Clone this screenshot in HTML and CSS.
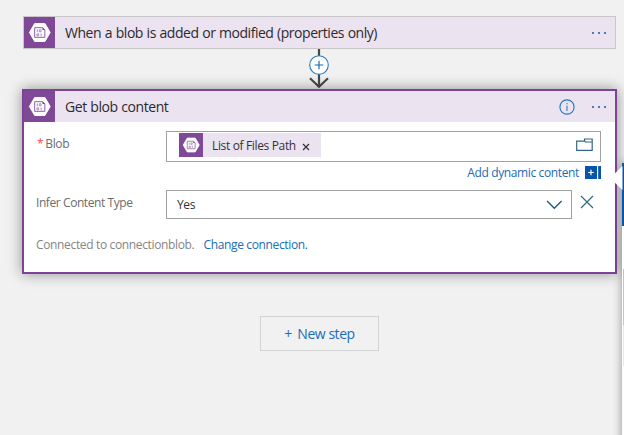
FILE: index.html
```html
<!DOCTYPE html>
<html lang="en">
<head>
<meta charset="utf-8">
<title>Workflow designer</title>
<link rel="stylesheet" href="styles.css">
</head>
<body>
<svg class="defs" aria-hidden="true">
  <symbol id="blob" viewBox="0 0 32 32">
    <path d="M5.6 16L11 6.7H21.6L27 16L21.6 25.3H11Z" fill="#fff" stroke="#fff" stroke-linejoin="round"/>
    <path d="M11 11H19.3L21.5 13.2V21H11Z" fill="none" stroke="#8e5ba7" stroke-width="1"/>
    <path d="M19 10.7V13.4H21.8Z" fill="#804998"/>
    <path d="M13.7 12.8V15.7M15.8 13.2H17.6V15.3H15.8ZM13.3 17.4H15.1V19.5H13.3ZM17.7 17V20" fill="none" stroke="#a57bb8" stroke-width=".9"/>
  </symbol>
</svg>
<main class="canvas">
  <section class="card trigger">
    <div class="tile"><svg><use href="#blob"/></svg></div>
    <h2 class="title title-long">When a blob is added or modified (properties only)</h2>
    <div class="dots"><i></i><i></i><i></i></div>
  </section>
  <div class="connector">
    <svg width="24" height="40" viewBox="0 0 24 40" fill="none">
      <path d="M12 0V37M3 29.3L12 37.8L21 29.3" stroke="#484848" stroke-width="2.2"/>
      <circle cx="12" cy="16" r="9.3" fill="#fff" stroke="#2878c4" stroke-width="1.1"/>
      <path d="M12 11.7V20.3M7.7 16H16.3" stroke="#1769b8" stroke-width="1.2"/>
    </svg>
  </div>
  <section class="card action">
    <header class="head">
      <div class="tile"><svg><use href="#blob"/></svg></div>
      <h2 class="title title-short">Get blob content</h2>
      <svg class="info" width="16" height="16" viewBox="0 0 16 16" fill="none" stroke="#2672bd"><circle cx="8" cy="8" r="7.1" stroke-width="1.1"/><path d="M8 6.7V12M8 4V5.3"/></svg>
      <div class="dots"><i></i><i></i><i></i></div>
    </header>
    <div class="body">
      <div class="row">
        <label class="label label-blob"><span class="star">*</span>Blob</label>
        <div class="field blob-field">
          <div class="token"><span class="mini"><svg><use href="#blob"/></svg></span><span class="token-text">List of Files Path</span><svg class="remove" width="8" height="8" viewBox="0 0 8 8"><path d="M1 1L7 7M7 1L1 7" stroke="#333" stroke-width="1.2"/></svg></div>
          <svg class="folder" width="17" height="14" viewBox="0 0 17 14" fill="none" stroke="#326782" stroke-width="1.2"><path d="M.7 3.2H8.6V1H16.2V12.3H.7ZM8.6 3.2L9.4 4H16"/></svg>
        </div>
      </div>
      <div class="dynamic"><a>Add dynamic content</a><svg width="16" height="13" viewBox="0 0 16 13"><path d="M0 0H12V13H0ZM13.2 0H16V13H13.2Z" fill="#0754aa"/><path d="M6 3.7V9.3M3.2 6.5H8.8" stroke="#fff" stroke-width="1.2"/></svg></div>
      <div class="row">
        <label class="label label-type">Infer Content Type</label>
        <div class="field select"><span>Yes</span><svg width="17" height="10" viewBox="0 0 17 10"><path d="M1 1L8.3 8.3L15.6 1" fill="none" stroke="#205c80" stroke-width="1.4"/></svg></div>
        <svg class="clear" width="14" height="14" viewBox="0 0 14 14"><path d="M1 1L13 13M13 1L1 13" stroke="#326782" stroke-width="1.2"/></svg>
      </div>
      <div class="connection"><span>Connected to connectionblob.</span><a>Change connection.</a></div>
    </div>
  </section>
  <button class="new-step"><span class="plus">+</span><span class="new-text">New step</span></button>
</main>
<aside class="panel">
  <div class="panel-head"></div>
  <div class="panel-track"></div>
</aside>
<svg class="callout" width="14" height="24" viewBox="0 0 14 24"><path d="M12.5 0V24L0 12Z" fill="#fff"/></svg>
</body>
</html>
```
FILE: styles.css
```css
* { box-sizing: border-box; }
body {
  margin: 0;
  width: 624px;
  height: 435px;
  overflow: hidden;
  position: relative;
  background: #f1f1f1;
  font-family: "Open Sans", "Noto Sans", sans-serif;
  font-size: 12px;
  color: #333;
}
.defs { position: absolute; width: 0; height: 0; }
svg { display: block; flex: none; }
.canvas { display: flex; flex-direction: column; padding: 16px 7px 0 22px; }
.trigger {
  display: flex;
  align-items: center;
  height: 33px;
  margin: 0 1px;
  border: 1px solid #c8c6c8;
  background: #ebe3f0;
}
.tile { width: 31px; height: 31px; background: #804998; flex: none; }
.tile svg { width: 31px; height: 31px; }
.title { margin: 0 auto 0 10px; font-size: 14px; line-height: 20px; font-weight: 400; color: #2d2a2e; white-space: nowrap; }
.title-long { letter-spacing: -.47px; word-spacing: .5px; }
.title-short { letter-spacing: -.45px; word-spacing: .5px; }
.dots { display: flex; gap: 4px; margin-right: 9px; }
.action .dots { margin-right: 8px; }
.dots i { width: 2px; height: 2px; border-radius: 1px; background: #1757a8; }
.connector { height: 40px; display: flex; justify-content: center; padding-right: 1px; }
.action {
  height: 185px;
  border: 2px solid #7b4496;
  background: #fff;
  box-shadow: 0 0 13px rgba(0, 0, 0, .4);
}
.head { height: 31px; display: flex; align-items: center; background: #ebe3f0; }
.info { margin-right: 17px; }
.action .dots { margin-right: 9px; }
.body { padding: 9px 14px 0 12px; }
.row { display: flex; align-items: flex-start; }
.label { width: 130px; flex: none; color: #6c6c6c; line-height: 18px; white-space: nowrap; }
.label-blob { padding-top: 4px; letter-spacing: -.35px; padding-left: 1px; }
.label-type { padding-top: 4px; letter-spacing: -.42px; }
.star { color: #ef4c52; margin-right: 2px; }
.field { display: flex; align-items: center; justify-content: space-between; border: 1px solid #a0a0a0; background: #fff; }
.blob-field { width: 436px; height: 31px; padding: 0 7px 0 12px; }
.token { display: flex; align-items: center; width: 142px; height: 24px; margin-bottom: 3px; background: #ebe3f0; }
.mini { width: 24px; height: 24px; background: #804998; margin-right: 9px; }
.mini svg { width: 24px; height: 24px; }
.token-text { width: 84px; white-space: nowrap; letter-spacing: -.35px; }
.remove { margin: 4px 0 0 6px; }
.folder { margin-top: -3px; }
a { color: #1b6cb8; white-space: nowrap; }
.dynamic { height: 28px; padding: 4px 0 0; display: flex; justify-content: flex-end; gap: 6px; }
.dynamic a { line-height: 14px; letter-spacing: -.37px; }
.select { width: 406px; height: 29px; padding: 0 8px 0 10px; letter-spacing: -.4px; }
.clear { margin: 5px 0 0 8px; }
.connection { display: flex; gap: 9px; padding-top: 17px; line-height: 18px; color: #858585; letter-spacing: -.35px; white-space: nowrap; }
.new-step {
  width: 119px;
  height: 35px;
  margin: 42px 0 0 238px;
  padding: 0 0 1px;
  display: flex;
  align-items: center;
  justify-content: center;
  gap: 5px;
  border: 1px solid #d2d2d2;
  background: #f1f1f1;
  color: #1b6cb8;
  font: 14px "Open Sans", sans-serif;
}
.new-text { letter-spacing: -.45px; }
.panel {
  position: absolute;
  left: 622px;
  top: 163px;
  width: 12px;
  height: 290px;
  background: #fff;
  box-shadow: 0 0 10px rgba(0, 0, 0, .4);
}
.panel-head { height: 63px; background: #0754aa; }
.panel-track { height: 97px; margin: 43px 0 0 1px; background: linear-gradient(#c4c4c4 56px, #e8e8e8 56px); }
.callout { position: absolute; left: 610px; top: 166px; }
```
